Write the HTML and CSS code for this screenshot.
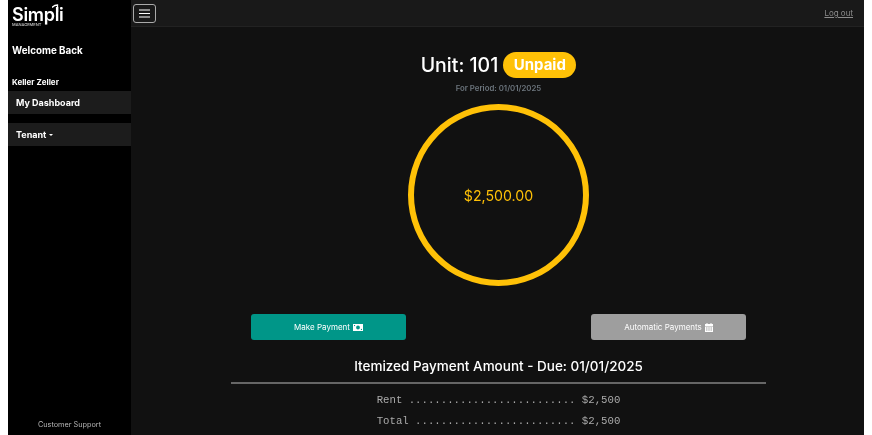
FILE: index.html
```html
<!DOCTYPE html>
<html lang="en">
<head>
    <meta charset="UTF-8">
    <meta name="viewport" content="width=device-width, initial-scale=1.0">
    <title>Simpli Management - Dashboard</title>
    <link rel="stylesheet" href="styles.css">
</head>
<body>
    <div class="wrapper">
        <aside class="sidebar">
            <div class="logo">
                <span class="logo-name">Simpli</span>
                <span class="logo-sub">MANAGEMENT</span>
                <svg class="logo-hook" width="8" height="8" viewBox="0 0 8 8"><path d="M0 3.500C2 1.500 3.500 1 5.500 1V8" fill="none" stroke="#fff" stroke-width="1.300"/></svg>
            </div>
            <h2 class="welcome">Welcome Back</h2>
            <div class="user-name">Keller Zeller</div>
            <a class="side-link" href="#">My Dashboard</a>
            <a class="side-link side-dropdown" href="#">Tenant <span class="caret"></span></a>
            <div class="support">Customer Support</div>
        </aside>
        <div class="main">
            <header class="topbar">
                <button class="menu-btn" type="button" aria-label="Toggle menu">
                    <svg width="11" height="9" viewBox="0 0 11 9"><path d="M0 1h11M0 4.500h11M0 8h11" stroke="#fff" stroke-width="1.200"/></svg>
                </button>
                <a class="logout" href="#">Log out</a>
            </header>
            <main class="content">
                <div class="unit-row">
                    <h1 class="unit">Unit: 101</h1>
                    <span class="badge">Unpaid</span>
                </div>
                <p class="period">For Period: 01/01/2025</p>
                <div class="circle">$2,500.00</div>
                <div class="actions">
                    <div class="action-col">
                        <a class="btn btn-pay" href="#">Make Payment
                            <svg width="10" height="7" viewBox="0 0 10 7"><path fill="#fff" fill-rule="evenodd" d="M0 0h10v7H0zM5 1.600a1.900 1.900 0 1 0 0 3.800 1.900 1.900 0 0 0 0-3.800zM1 1v1.200A1.200 1.200 0 0 0 2.200 1zM9 6V4.800A1.200 1.200 0 0 0 7.800 6z"/></svg>
                        </a>
                    </div>
                    <div class="action-col">
                        <a class="btn btn-auto" href="#">Automatic Payments
                            <svg width="8" height="9" viewBox="0 0 8 9"><path fill="#fff" fill-rule="evenodd" d="M1.500 0h1v1h3V0h1v1H8v2H0V1h1.500zM0 3.500h8V9H0zM1 4.500v1h1.500v-1zm2.250 0v1h1.500v-1zm2.250 0v1H7v-1zM1 6.500v1h1.500v-1zm2.250 0v1h1.500v-1zm2.250 0v1H7v-1z"/></svg>
                        </a>
                    </div>
                </div>
                <h3 class="itemized">Itemized Payment Amount - Due: 01/01/2025</h3>
                <hr class="divider">
                <div class="line-item">Rent .......................... $2,500</div>
                <div class="line-item">Total ......................... $2,500</div>
            </main>
        </div>
    </div>
</body>
</html>
```

FILE: styles.css
```css
html, body {
    height: 100%;
}
body {
    margin: 0 8px;
    background: #fff;
    font-family: Inter, "Liberation Sans", sans-serif;
    overflow: hidden;
}
.wrapper {
    display: flex;
    height: 100%;
    will-change: transform;
}
.sidebar {
    width: 123px;
    flex-shrink: 0;
    background: #000;
    color: #fff;
    display: flex;
    flex-direction: column;
}
.logo {
    position: relative;
    height: 27px;
    padding: 5px 0 0 4px;
    box-sizing: border-box;
    display: flex;
    flex-direction: column;
    line-height: 1;
}
.logo-name {
    height: 18px;
    line-height: 19px;
    font-size: 18px;
    font-weight: 600;
    letter-spacing: -0.3px;
}
.logo-sub {
    font-size: 4px;
    line-height: 4px;
    font-weight: 500;
    color: #ccc;
}
.logo-hook {
    position: absolute;
    left: 44px;
    top: 4px;
}
.welcome {
    margin: 16px 0 0 4px;
    font-size: 9.800px;
    font-weight: 700;
    line-height: 16px;
}
.user-name {
    margin: 17px 0 0 4px;
    font-size: 8px;
    font-weight: 700;
    line-height: 12px;
}
.side-link {
    display: block;
    margin-top: 3px;
    padding: 0 8px;
    height: 23px;
    line-height: 23px;
    background: #1c1c1c;
    color: #fff;
    font-size: 9px;
    font-weight: 700;
    text-decoration: none;
}
.side-dropdown {
    margin-top: 9px;
}
.caret {
    display: inline-block;
    vertical-align: 2px;
    border-top: 2.500px solid #fff;
    border-left: 2.500px solid transparent;
    border-right: 2.500px solid transparent;
}
.support {
    margin-top: auto;
    padding-bottom: 5px;
    text-align: center;
    font-size: 7.300px;
    line-height: 10px;
    color: #b5b5b5;
}
.main {
    flex: 1;
    min-width: 0;
    background: #111;
    color: #fff;
}
.topbar {
    height: 26px;
    display: flex;
    align-items: center;
    justify-content: space-between;
    padding: 0 11px 0 2px;
    background: #191919;
    border-bottom: 1px solid #222;
}
.menu-btn {
    width: 23px;
    height: 19px;
    padding: 0;
    display: flex;
    align-items: center;
    justify-content: center;
    background: transparent;
    border: 1px solid #aaa;
    border-radius: 3px;
}
.logout {
    color: #8c8c8c;
    font-size: 8px;
}
.content {
    display: flex;
    flex-direction: column;
    align-items: center;
    padding-left: 2px;
}
.unit-row {
    display: flex;
    align-items: center;
    gap: 5px;
    margin-top: 25px;
}
.unit {
    margin: 0;
    font-size: 19.500px;
    font-weight: 500;
    line-height: 26px;
}
.badge {
    width: 73px;
    height: 26px;
    line-height: 26px;
    text-align: center;
    border-radius: 13px;
    background: #ffc107;
    font-size: 15px;
    font-weight: 700;
}
.period {
    margin: 5px 0 0;
    font-size: 7.800px;
    line-height: 10px;
    font-weight: 600;
    color: #6c757d;
}
.circle {
    width: 169px;
    height: 170px;
    margin-top: 11px;
    display: flex;
    align-items: center;
    justify-content: center;
    border: 6px solid #ffc107;
    border-radius: 50%;
    color: #ffc107;
    font-size: 14.200px;
}
.actions {
    display: flex;
    width: 680px;
    margin-top: 28px;
}
.action-col {
    flex: 1;
    display: flex;
    justify-content: center;
}
.btn {
    width: 155px;
    height: 26px;
    display: flex;
    align-items: center;
    justify-content: center;
    gap: 3px;
    border-radius: 3px;
    color: #fff;
    font-size: 8px;
    font-weight: 400;
    text-decoration: none;
}
.btn-pay {
    background: #009688;
}
.btn-auto {
    background: #9e9e9e;
}
.itemized {
    margin: 16px 0 0;
    font-size: 13.500px;
    font-weight: 500;
    line-height: 20px;
}
.divider {
    width: 535px;
    margin: 6px 0 0;
    border: 0;
    border-top: 2px solid #666;
}
.line-item {
    margin-top: 8px;
    font-family: "Liberation Mono", monospace;
    font-size: 10.700px;
    line-height: 13px;
    color: #aaa;
    white-space: pre;
}
.divider + .line-item {
    margin-top: 10px;
}
```
